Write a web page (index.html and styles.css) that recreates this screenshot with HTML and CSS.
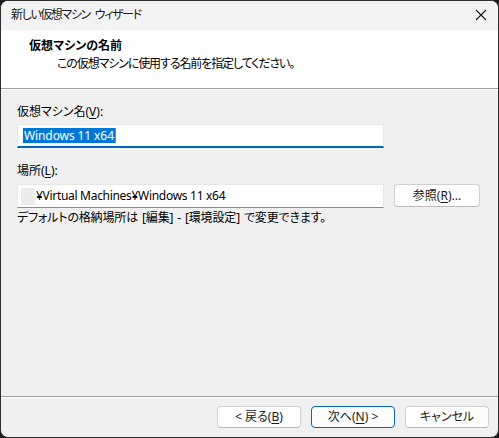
FILE: index.html
```html
<!DOCTYPE html>
<html lang="ja">
<head>
<meta charset="utf-8">
<title>新しい仮想マシン ウィザード</title>
<link rel="stylesheet" href="styles.css">
</head>
<body>
<div class="window">
  <div class="titlebar">
    <span class="title">新しい仮想マシン<span class="gap"> </span>ウィザード</span>
    <svg class="close" width="12" height="12" viewBox="0 0 12 12">
      <path d="M1 1 L11 11 M11 1 L1 11" stroke="#1a1a1a" stroke-width="1.1" fill="none"/>
    </svg>
  </div>
  <div class="header">
    <div class="h-title">仮想マシンの名前</div>
    <div class="h-sub">この仮想マシンに使用する名前を指定してください。</div>
  </div>
  <div class="content">
    <div class="label label-first">仮想マシン名(<u>V</u>):</div>
    <div class="field field-focus"><span class="sel">Windows 11 x64</span><span class="caret"></span></div>
    <div class="label label-second">場所(<u>L</u>):</div>
    <div class="row">
      <div class="field field-path"><span class="mask"></span><span class="path">¥Virtual Machines¥Windows 11 x64</span></div>
      <button class="btn btn-browse">参照(<u>R</u>)...</button>
    </div>
    <div class="note">デフォルトの格納場所は [編集] - [環境設定] で変更できます。</div>
  </div>
  <div class="footer">
    <button class="btn">&lt; 戻る(<u>B</u>)</button>
    <button class="btn btn-default">次へ(<u>N</u>) &gt;</button>
    <button class="btn">キャンセル</button>
  </div>
</div>
</body>
</html>
```
FILE: styles.css
```css
* { box-sizing: border-box; }

html, body {
  margin: 0;
  padding: 0;
  background: #1c1c1c;
}

body {
  width: 499px;
  height: 438px;
  font-family: "Noto Sans", "Noto Sans CJK JP", sans-serif;
  font-size: 12px;
  color: #000;
  font-feature-settings: "palt";
}

.window {
  width: 499px;
  height: 438px;
  display: flex;
  flex-direction: column;
  background: #f0f0f0;
  border: 1px solid #2e2e2e;
  border-radius: 8px;
  overflow: hidden;
}

.titlebar {
  height: 29px;
  display: flex;
  align-items: center;
  justify-content: space-between;
  padding: 0 11px 1px 10px;
  background: #f3f3f3;
}

.title {
  line-height: 16px;
  color: #1a1a1a;
  letter-spacing: -1.4px;
}

.title .gap {
  display: inline-block;
  width: 5px;
}

.close { display: block; }

.header {
  height: 59px;
  background: #fff;
  border-bottom: 1px solid #a0a0a0;
  box-shadow: 0 1px 0 #fff;
  padding: 8px 0 0 28px;
}

.h-title {
  font-weight: bold;
  line-height: 16px;
}

.h-sub {
  margin-top: 2px;
  margin-left: 28px;
  line-height: 16px;
  letter-spacing: -1.1px;
}

.content {
  flex: 1;
  padding: 15px 0 0 16px;
}

.label {
  line-height: 16px;
}

.label-first { margin-bottom: 4px; }
.label-second { margin-top: 15px; margin-bottom: 5px; }

u { text-decoration-thickness: 1px; text-underline-offset: 2px; }

.field {
  width: 367px;
  height: 24px;
  background: #fff;
  border: 1px solid #e6e6e6;
  border-bottom: 1px solid #8a8a8a;
  display: flex;
  align-items: center;
  padding-left: 5px;
  line-height: 16px;
  white-space: nowrap;
}

.field-focus {
  border-bottom: 2px solid #0067c0;
  padding-bottom: 1px;
}

.sel {
  background: #0078d7;
  color: #fff;
  padding: 0 1px;
  line-height: 15px;
  letter-spacing: -0.1px;
}

.caret {
  width: 1px;
  height: 15px;
  background: #e07020;
}

.row {
  display: flex;
  gap: 10px;
}

.field-path { padding-left: 3px; }

.path { letter-spacing: -0.3px; }

.mask {
  width: 14px;
  height: 17px;
  background: #ececec;
  margin-right: 1px;
}

.note {
  margin-top: 2px;
  line-height: 16px;
  letter-spacing: -0.15px;
  word-spacing: 1px;
}

.btn {
  font: inherit;
  font-feature-settings: "palt";
  color: #1a1a1a;
  width: 84px;
  height: 22px;
  padding: 0;
  background: #fdfdfd;
  border: 1px solid #d0d0d0;
  border-bottom-color: #bcbcbc;
  border-radius: 4px;
  line-height: 16px;
}

.btn-browse {
  width: 86px;
  height: 23px;
}

.btn-default {
  border: 1px solid #0067c0;
}

.footer {
  height: 41px;
  border-top: 1px solid #a0a0a0;
  box-shadow: inset 0 1px 0 #fff;
  display: flex;
  justify-content: flex-end;
  gap: 10px;
  padding: 9px 9px 0 0;
}
```
